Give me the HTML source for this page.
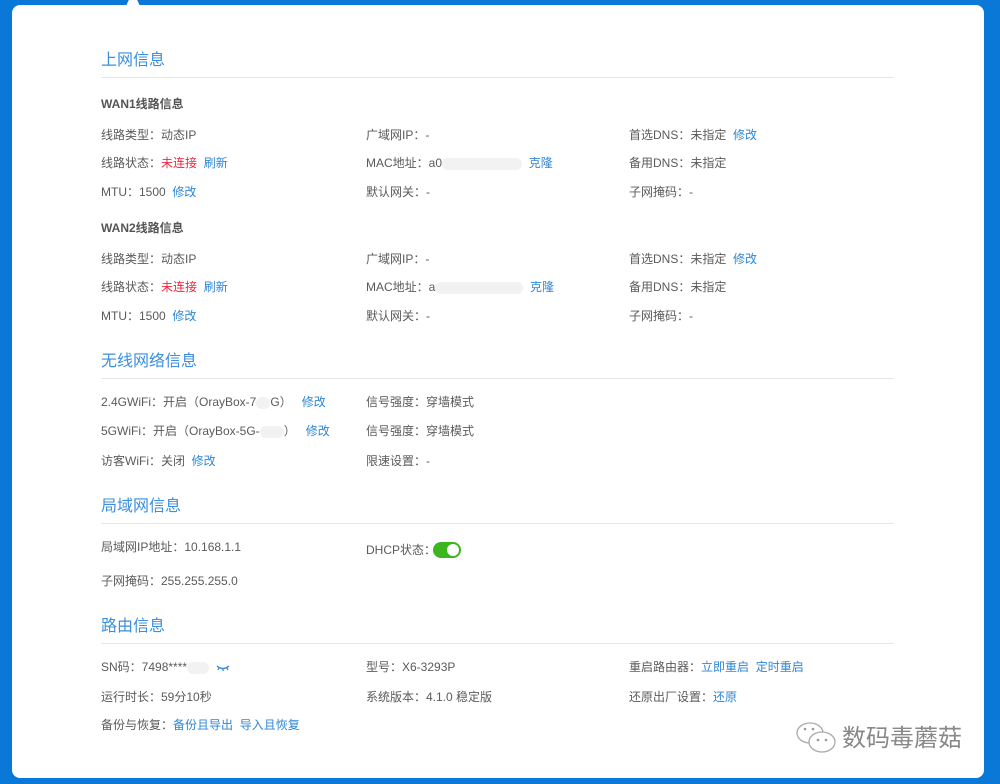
<!DOCTYPE html>
<html><head><meta charset="utf-8"><style>
body{margin:0;width:1000px;height:784px;background:#0a78d6;position:relative;overflow:hidden;font-family:"Liberation Sans","Noto Sans CJK SC",sans-serif;font-size:12px;color:#5a5a5a}
.card{position:absolute;left:12px;top:5px;width:972px;height:773px;background:#fff;border-radius:8px}
.notch{position:absolute;left:126px;top:0;width:14px;height:6px;background:#fff;clip-path:polygon(0 100%,20% 0,80% 0,100% 100%)}
.t{position:absolute;white-space:nowrap;line-height:14px}
.h{position:absolute;left:101px;font-size:16px;color:#3b8fdc;line-height:20px}
.hr{position:absolute;left:101px;width:793px;height:1px;background:#e6e6e6}
.b{font-weight:bold;color:#555}
a{color:#2f86d6;text-decoration:none}
.r{color:#f0263c}
.blur{display:inline-block;background:#f2f2f2;height:12px;vertical-align:middle;border-radius:6px}
</style></head><body>
<div class="card"></div><div class="notch"></div>

<div class="h" style="top:51px">上网信息</div><div class="hr" style="top:77px"></div>
<div class="t b" style="left:101px;top:97px">WAN1线路信息</div>
<div class="t" style="left:101px;top:128px">线路类型：动态IP</div>
<div class="t" style="left:366px;top:128px">广域网IP：-</div>
<div class="t" style="left:629px;top:128px">首选DNS：未指定 &nbsp;<a>修改</a></div>
<div class="t" style="left:101px;top:156px">线路状态：<span class="r">未连接</span> &nbsp;<a>刷新</a></div>
<div class="t" style="left:366px;top:156px">MAC地址：a0<span class="blur" style="width:80px"></span> &nbsp;<a>克隆</a></div>
<div class="t" style="left:629px;top:156px">备用DNS：未指定</div>
<div class="t" style="left:101px;top:185px">MTU：1500 &nbsp;<a>修改</a></div>
<div class="t" style="left:366px;top:185px">默认网关：-</div>
<div class="t" style="left:629px;top:185px">子网掩码：-</div>

<div class="t b" style="left:101px;top:221px">WAN2线路信息</div>
<div class="t" style="left:101px;top:252px">线路类型：动态IP</div>
<div class="t" style="left:366px;top:252px">广域网IP：-</div>
<div class="t" style="left:629px;top:252px">首选DNS：未指定 &nbsp;<a>修改</a></div>
<div class="t" style="left:101px;top:280px">线路状态：<span class="r">未连接</span> &nbsp;<a>刷新</a></div>
<div class="t" style="left:366px;top:280px">MAC地址：a<span class="blur" style="width:88px"></span> &nbsp;<a>克隆</a></div>
<div class="t" style="left:629px;top:280px">备用DNS：未指定</div>
<div class="t" style="left:101px;top:309px">MTU：1500 &nbsp;<a>修改</a></div>
<div class="t" style="left:366px;top:309px">默认网关：-</div>
<div class="t" style="left:629px;top:309px">子网掩码：-</div>

<div class="h" style="top:352px">无线网络信息</div><div class="hr" style="top:378px"></div>
<div class="t" style="left:101px;top:395px">2.4GWiFi：开启（OrayBox-7<span class="blur" style="width:14px"></span>G） &nbsp;&nbsp;<a>修改</a></div>
<div class="t" style="left:366px;top:395px">信号强度：穿墙模式</div>
<div class="t" style="left:101px;top:424px">5GWiFi：开启（OrayBox-5G-<span class="blur" style="width:24px"></span>） &nbsp;&nbsp;<a>修改</a></div>
<div class="t" style="left:366px;top:424px">信号强度：穿墙模式</div>
<div class="t" style="left:101px;top:454px">访客WiFi：关闭 &nbsp;<a>修改</a></div>
<div class="t" style="left:366px;top:454px">限速设置：-</div>

<div class="h" style="top:497px">局域网信息</div><div class="hr" style="top:523px"></div>
<div class="t" style="left:101px;top:540px">局域网IP地址：10.168.1.1</div>
<div class="t" style="left:366px;top:543px">DHCP状态：</div>
<div style="position:absolute;left:433px;top:542px;width:28px;height:16px;border-radius:8px;background:#3cb51e"><div style="position:absolute;right:2px;top:2px;width:12px;height:12px;border-radius:6px;background:#fff"></div></div>
<div class="t" style="left:101px;top:574px">子网掩码：255.255.255.0</div>

<div class="h" style="top:617px">路由信息</div><div class="hr" style="top:643px"></div>
<div class="t" style="left:101px;top:660px">SN码：7498****<span class="blur" style="width:22px"></span> &nbsp;<svg width="14" height="8" viewBox="0 0 14 8" style="vertical-align:middle"><path d="M1 2 Q7 7 13 2 M3 4 L2 6 M7 5 V7 M11 4 L12 6" stroke="#2f86d6" stroke-width="1.3" fill="none"/></svg></div>
<div class="t" style="left:366px;top:660px">型号：X6-3293P</div>
<div class="t" style="left:629px;top:660px">重启路由器：<a>立即重启</a> &nbsp;<a>定时重启</a></div>
<div class="t" style="left:101px;top:690px">运行时长：59分10秒</div>
<div class="t" style="left:366px;top:690px">系统版本：4.1.0 稳定版</div>
<div class="t" style="left:629px;top:690px">还原出厂设置：<a>还原</a></div>
<div class="t" style="left:101px;top:718px">备份与恢复：<a>备份且导出</a> &nbsp;<a>导入且恢复</a></div>

<svg style="position:absolute;left:795px;top:720px" width="44" height="36" viewBox="0 0 44 36"><ellipse cx="15" cy="13" rx="13" ry="10" fill="#fff" stroke="#aaa" stroke-width="1.3"/><ellipse cx="27" cy="22" rx="13" ry="10" fill="#fff" stroke="#aaa" stroke-width="1.3"/><circle cx="10" cy="9" r="1.3" fill="#999"/><circle cx="18" cy="9" r="1.3" fill="#999"/><circle cx="23" cy="20" r="1.3" fill="#999"/><circle cx="31" cy="20" r="1.3" fill="#999"/></svg>
<div class="t" style="left:842px;top:725px;font-size:24px;line-height:28px;color:#888">数码毒蘑菇</div>
</body></html>
